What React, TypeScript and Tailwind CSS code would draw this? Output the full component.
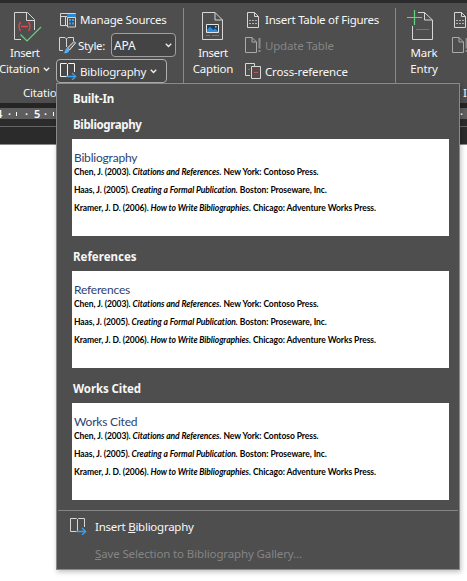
import React from 'react';

const stroke = '#d6d6d6';

function Chevron() {
  return (
    <svg width="7" height="5" viewBox="0 0 7 5" fill="none" className="shrink-0">
      <path d="M.8 .8 3.5 3.5 6.2 .8" stroke="#f0f0f0" strokeWidth="1.3" />
    </svg>
  );
}

function BookArrow({ lit = false }: { lit?: boolean }) {
  return (
    <svg width="17" height="17" viewBox="0 0 17 17" fill="none" className="shrink-0">
      <path
        d="M8.5 13.5 7.5 12.5 6.5 13.5H.5V.5H6.5L7.5 1.5 8.5 .5H14.5V9M7.5 1.5V12.5"
        stroke={lit ? '#f4f4f4' : stroke}
      />
      <path d="M6.5 13.5H15.5M12 10 15.7 13.5 12 17" stroke="#3f9ee8" strokeWidth="1.3" />
    </svg>
  );
}

function CitationIcon() {
  return (
    <svg width="30" height="32" viewBox="0 0 30 32" fill="none">
      <path d="M9 28.5H2.5V1.5H15.5L22.5 8.5V19M14.5 1.5V9.5H22.5" stroke={stroke} />
      <path d="M8.5 11Q5.5 15.5 8.5 20M16.5 11Q19.5 15.5 16.5 20M9 15.5H16" stroke="#e0494c" strokeWidth="1.4" />
      <path d="M8.5 23.5 15 30 29 16" stroke="#69d281" strokeWidth="1.2" />
    </svg>
  );
}

function CaptionIcon() {
  return (
    <svg width="22" height="30" viewBox="0 0 22 30" fill="none">
      <path d="M.5 1.5H13L20.5 9V28.5H.5ZM13 1.5V9H20.5" stroke={stroke} />
      <path d="M4.5 13.5H16.5V21.5H4.5Z" fill="#1b3f5e" stroke="#e4e4e4" />
      <path d="M5 19 8 15.5 11 19 13 17.5 16 20V21H5Z" fill="#2d8de0" />
      <path d="M13 15h1.5v1.5H13Z" fill="#f5a65b" />
      <path d="M4 24.5H8M10 24.5H17" stroke="#e0494c" />
    </svg>
  );
}

function MarkIcon() {
  return (
    <svg width="27" height="32" viewBox="0 0 27 32" fill="none">
      <path d="M5.5 17V30.5H25.5V11L17.5 3.5H11M17.5 3.5V11H25.5" stroke={stroke} />
      <path d="M0 8.5H15M7.5 1V16" stroke="#69d281" strokeWidth="1.2" />
      <path d="M9 20.5H22" stroke="#e0494c" />
    </svg>
  );
}

function SourcesIcon() {
  return (
    <svg width="17" height="16" viewBox="0 0 17 16" fill="none" className="shrink-0">
      <path d="M7 13.5H.5V1.5H15.5V3M.5 4.5H7M5.5 4.5V13" stroke={stroke} />
      <path d="M7 2h9v3H7Z" fill="#2d86d4" />
      <path d="M7.5 5.5H15.5V15H7.5Z" stroke={stroke} />
      <path d="M9 7h2v2H9ZM12 7h2v2h-2ZM9 10.5h2v2H9ZM12 10.5h2v2h-2Z" fill="#3f9ee8" />
    </svg>
  );
}

function StyleIcon() {
  return (
    <svg width="17" height="17" viewBox="0 0 17 17" fill="none" className="shrink-0">
      <path d="M4 13.5H.5V.5H6L7.5 2 9 .5H14.5V4M7.5 2V10" stroke={stroke} />
      <path d="M8.5 11 15 4.5 16.5 6 10.5 13Z" stroke="#eeeeee" fill="#666666" />
      <path d="M4.5 16Q6 15.5 6.3 13 7 10.5 9 11.5 11.5 13 9.5 15 7.5 17 4.5 16Z" fill="#55b0f5" />
    </svg>
  );
}

function TableFiguresIcon() {
  return (
    <svg width="13" height="16" viewBox="0 0 13 16" fill="none" className="shrink-0">
      <path d="M.5 .5H7.5L11.5 4.5V15.5H.5ZM7.5 .5V4.5H11.5" stroke={stroke} />
      <path d="M2 8.5H4M5 8.5H7M8 8.5H10M2 11.5H4M5 11.5H7M8 11.5H10" stroke="#b0b0b0" />
    </svg>
  );
}

function UpdateIcon() {
  return (
    <svg width="17" height="17" viewBox="0 0 17 17" fill="none" className="shrink-0">
      <path d="M.5 .5H7L11.5 5V15.5H.5ZM7 .5V5H11.5" stroke="#aaaaaa" />
      <path d="M14.5 1V11.5M14.5 13V15" stroke="#8c8c8c" strokeWidth="2" />
    </svg>
  );
}

function CrossIcon() {
  return (
    <svg width="16" height="16" viewBox="0 0 16 16" fill="none" className="shrink-0">
      <path d="M5 12.5H.5V.5H9.5V3M6.5 3.5H15.5V15.5H6.5Z" stroke={stroke} />
      <path d="M3 6.5H5M9 9.5H13" stroke="#e0494c" strokeWidth="1.2" />
    </svg>
  );
}

const entries = [
  { lead: 'Chen, J. (2003).', title: 'Citations and References.', tail: 'New York: Contoso Press.' },
  { lead: 'Haas, J. (2005).', title: 'Creating a Formal Publication.', tail: 'Boston: Proseware, Inc.' },
  { lead: 'Kramer, J. D. (2006).', title: 'How to Write Bibliographies.', tail: 'Chicago: Adventure Works Press.' },
];

function GalleryItem({ name, tracking }: { name: string; tracking: string }) {
  return (
    <section className="h-[132px] pl-[15px]">
      <h3 className={`h-[25px] pl-px text-[11.5px] leading-[22px] font-bold ${tracking}`}>{name}</h3>
      <div className="h-[97px] w-[377px] bg-white pt-[11px] pl-[2px] font-['Lato','Liberation_Sans',sans-serif] text-black">
        <div className="h-[14px] text-[12px] leading-[16px] text-[#2c4273]">{name}</div>
        {entries.map((e) => (
          <p key={e.lead} className="h-[18px] text-[8.5px] leading-[17px] font-bold tracking-[-0.07px] whitespace-nowrap">
            {e.lead} <i>{e.title}</i> {e.tail}
          </p>
        ))}
      </div>
    </section>
  );
}

export default function App() {
  return (
    <div className="relative flex h-[581px] w-[467px] flex-col overflow-hidden bg-white font-['Noto_Sans','Open_Sans',sans-serif] text-[11.5px] leading-4 tracking-[-0.2px] whitespace-nowrap text-[#f7f7f7]">
      <div className="h-[3px] shrink-0 bg-[#2b2b2b]" />
      <header className="h-[100px] shrink-0 bg-[#4e4e4e]">
        <div className="flex h-[80px]">
          <div className="flex w-[56px] flex-col pt-[8px]">
            <div className="pl-[12px]"><CitationIcon /></div>
            <div className="mt-[2px] pl-[10px] tracking-[-0.4px]">Insert</div>
            <div className="flex items-center gap-[4px]"><span className="-ml-px">Citation</span><Chevron /></div>
          </div>
          <div className="flex w-[127px] flex-col">
            <div className="flex h-[30px] items-center gap-[3px] pt-[4px] pl-[4px]"><SourcesIcon /><span>Manage Sources</span></div>
            <div className="flex h-[24px] items-center pl-[3px]">
              <StyleIcon />
              <span className="w-[35px] pt-px pl-[2px] tracking-[-0.3px]">Style:</span>
              <div className="flex h-[24px] w-[65px] items-center justify-between rounded-[4px] border border-[#a0a0a0] bg-[#444] pr-[3px] pl-[2px]"><span className="pt-px text-[12px]">APA</span><Chevron /></div>
            </div>
            <div className="mt-[2px] flex h-[24px] w-[111px] items-center gap-[4px] rounded-[4px] border border-[#b0b0b0] bg-[#484848] pl-[3px]"><BookArrow lit /><span className="-ml-px pt-[2px]">Bibliography</span><Chevron /></div>
          </div>
          <div className="mt-[5px] w-px bg-[#8a8a8a]" />
          <div className="flex w-[61px] flex-col items-center pt-[8px] pr-[3px]">
            <CaptionIcon />
            <div className="mt-[4px] tracking-[-0.4px]">Insert</div><div>Caption</div>
          </div>
          <div className="flex w-[150px] flex-col">
            <div className="flex h-[30px] items-center gap-[5px] pt-[4px] pl-[2px] tracking-[-0.25px]"><TableFiguresIcon /><span>Insert Table of Figures</span></div>
            <div className="flex h-[24px] items-center gap-[3px] text-[#858585]"><UpdateIcon /><span className="pt-px">Update Table</span></div>
            <div className="mt-[2px] flex h-[24px] items-center gap-[4px] tracking-[-0.15px]"><CrossIcon /><span className="pt-[2px]">Cross-reference</span></div>
          </div>
          <div className="mt-[5px] w-px bg-[#8a8a8a]" />
          <div className="flex w-[56px] flex-col items-center pt-[6px]">
            <div className="pr-[7px]"><MarkIcon /></div>
            <div className="mt-[4px]">Mark</div><div>Entry</div>
          </div>
          <div className="flex w-[15px] flex-col overflow-hidden">
            <div className="flex h-[30px] items-center pt-[4px] pl-[2px]"><TableFiguresIcon /></div>
            <div className="flex h-[24px] items-center"><UpdateIcon /></div>
          </div>
        </div>
        <div className="flex justify-between pt-[2px] pl-[23px]"><span>Citations</span><span className="w-[4px]">I</span></div>
      </header>
      <div className="h-[5px] shrink-0 bg-[#252525]" />
      <div className="flex h-[11px] shrink-0 items-center justify-between bg-[#5e5e5e] text-[11px] leading-[11px] font-semibold">
        <div className="flex items-center"><span className="-ml-[4px] w-[12px]">4</span><span className="w-[8px]">·</span><span className="h-[4px] w-px bg-white" /><span className="w-[17px] pl-[8px]">·</span><span className="w-[10px]">5</span><span className="w-[9px]">·</span><span className="h-[4px] w-px bg-white" /></div>
        <span className="w-[7px]">·</span>
      </div>
      <div className="h-[26px] shrink-0 border-b border-[#8a8a8a] bg-[#2b2b2b] pt-[7px]"><div className="h-px bg-[#666]" /></div>

      <main className="absolute top-[83px] left-[56px] h-[487px] w-[404px] border border-[#8a8a8a] bg-[#4e4e4e] shadow-[1px_2px_5px_rgba(0,0,0,0.25)]">
        <h2 className="h-[30px] pt-[7px] pl-[16px] font-bold">Built-In</h2>
        <GalleryItem name="Bibliography" tracking="tracking-[-0.35px]" />
        <GalleryItem name="References" tracking="tracking-[0px]" />
        <GalleryItem name="Works Cited" tracking="tracking-[-0.1px]" />
        <div className="mx-px h-px bg-[#858585]" />
        <div className="flex h-[31px] items-center gap-[8px] pl-[13px] tracking-[-0.25px]"><BookArrow /><span>Insert <u>B</u>ibliography</span></div>
        <div className="pt-[4px] pl-[38px] tracking-[-0.13px] text-[#858585]"><u>S</u>ave Selection to Bibliography Gallery...</div>
      </main>
    </div>
  );
}
